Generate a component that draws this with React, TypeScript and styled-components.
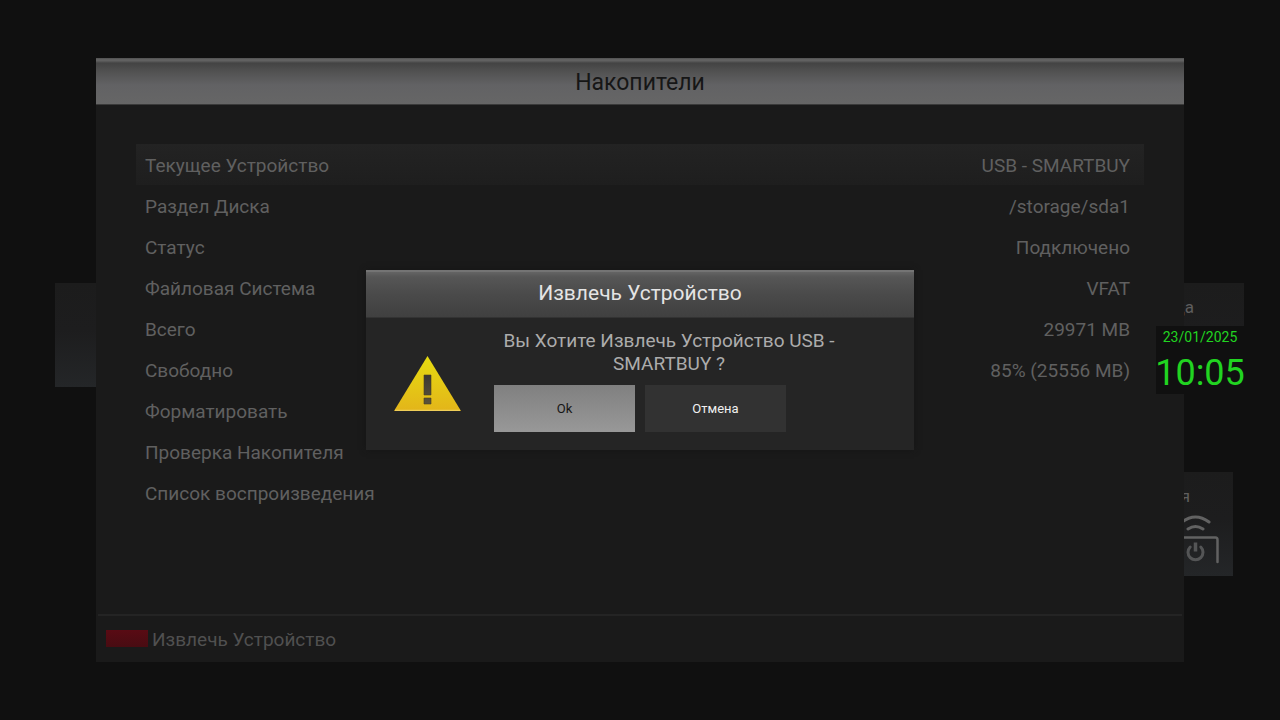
import React from "react";
import styled, { createGlobalStyle } from "styled-components";

const GlobalStyle = createGlobalStyle`
  *, *::before, *::after { box-sizing: border-box; }
  body {
    margin: 0;
    background: #101010;
    font-family: Roboto, "Liberation Sans", sans-serif;
  }
  h1, h2, p, dl, dt, dd { margin: 0; font-weight: 400; }
`;

const Screen = styled.div`
  position: relative;
  display: flex;
  min-height: 100vh;
  padding: 58px 7.5%;
  overflow: hidden;
`;

const Tile = styled.div<{ $left?: number; $right?: number; $top: number; $width: number }>`
  position: absolute;
  top: ${(p) => p.$top}px;
  ${(p) => (p.$left !== undefined ? `left: ${p.$left}px;` : "")}
  ${(p) => (p.$right !== undefined ? `right: ${p.$right}px;` : "")}
  width: ${(p) => p.$width}px;
  height: 104px;
  background: linear-gradient(#1c1c1c 0%, #1d1d1e 45%, #242628 100%);
  color: #5e5e5e;
`;

const TileLabel = styled.span<{ $inset: number }>`
  display: block;
  padding: 14px ${(p) => p.$inset}px 0 0;
  font-size: 17px;
  line-height: 20px;
  text-align: right;
`;

const RemoteIcon = styled.svg`
  position: absolute;
  right: 13px;
  bottom: 10px;
  width: 48px;
  height: 52px;
`;

const Clock = styled.time`
  position: absolute;
  top: 326px;
  right: 36px;
  display: flex;
  flex-direction: column;
  align-items: center;
  width: 88px;
  height: 68px;
  background: #101010;
  color: #21d421;
`;

const ClockDate = styled.span`
  font-size: 14px;
  line-height: 22px;
`;

const ClockTime = styled.span`
  font-size: 36px;
  line-height: 50px;
`;

const Panel = styled.main`
  position: relative;
  display: flex;
  flex: 1;
  flex-direction: column;
  background: #1a1a1a;
`;

const PanelHeader = styled.header`
  height: 47px;
  border-bottom: 1px solid #3a3a3a;
  background: linear-gradient(#505050 0, #666 2px, #525252 4px, #434343 5px, #525252 14px, #626264 27px, #666 46px);
  text-align: center;
`;

const PanelTitle = styled.h1`
  color: #161616;
  font-size: 23px;
  line-height: 50px;
`;

const Details = styled.dl`
  flex: 1;
  padding: 39px 40px 0;
`;

const DetailRow = styled.div<{ $selected?: boolean }>`
  display: flex;
  justify-content: space-between;
  height: 41px;
  padding: 0 14px 0 9px;
  background: ${(p) => (p.$selected ? "linear-gradient(#232323, #1e1e1e)" : "none")};
  color: #606060;
  font-size: 19px;
  line-height: 43px;
`;

const PanelFooter = styled.footer`
  display: flex;
  align-items: center;
  height: 48px;
  margin: 0 2px;
  padding: 2px 8px 0;
  border-top: 2px solid #242424;
`;

const FooterAction = styled.button`
  display: flex;
  align-items: center;
  gap: 4px;
  padding: 0;
  border: 0;
  background: none;
  color: #505050;
  font: inherit;
  font-size: 19px;
  line-height: 24px;
`;

const RedKey = styled.span`
  width: 42px;
  height: 17px;
  margin-bottom: 4px;
  background: linear-gradient(#590b14, #480c12);
`;

const Overlay = styled.div`
  position: absolute;
  inset: 0;
  display: flex;
  align-items: center;
  justify-content: center;
`;

const Dialog = styled.section`
  width: 548px;
  background: #252525;
  box-shadow: 0 0 6px #151515;
`;

const DialogHeader = styled.header`
  height: 48px;
  border-top: 2px solid #747474;
  border-bottom: 1px solid #333;
  background: linear-gradient(#646464 0, #565656 5px, #4a4a4a 50%, #404040 100%);
  text-align: center;
`;

const DialogTitle = styled.h2`
  color: #e4e4e4;
  font-size: 21px;
  line-height: 42px;
`;

const DialogBody = styled.div`
  display: flex;
  gap: 33px;
  padding: 11px 70px 18px 28px;
`;

const WarningIcon = styled.svg`
  flex: none;
  width: 67px;
  height: 55px;
  margin-top: 27px;
`;

const DialogContent = styled.div`
  flex: 1;
`;

const Message = styled.p`
  color: #acacac;
  font-size: 19px;
  line-height: 23px;
  text-align: center;
`;

const Actions = styled.div`
  display: flex;
  gap: 10px;
  margin-top: 10px;
`;

const DialogButton = styled.button<{ $focused?: boolean }>`
  width: 141px;
  height: 47px;
  padding: 0;
  border: 0;
  background: ${(p) => (p.$focused ? "linear-gradient(#808080, #989898)" : "#323232")};
  color: ${(p) => (p.$focused ? "#161616" : "#f0f0f0")};
  font: inherit;
  font-size: 13px;
`;

const details = [
  { label: "Текущее Устройство", value: "USB - SMARTBUY" },
  { label: "Раздел Диска", value: "/storage/sda1" },
  { label: "Статус", value: "Подключено" },
  { label: "Файловая Система", value: "VFAT" },
  { label: "Всего", value: "29971 MB" },
  { label: "Свободно", value: "85% (25556 MB)" },
  { label: "Форматировать", value: "" },
  { label: "Проверка Накопителя", value: "" },
  { label: "Список воспроизведения", value: "" },
];

export default function App() {
  return (
    <>
      <GlobalStyle />
      <Screen>
        <Tile $left={55} $top={283} $width={105} />
        <Tile $right={36} $top={283} $width={105}>
          <TileLabel $inset={50}>да</TileLabel>
        </Tile>
        <Tile $right={47} $top={472} $width={105}>
          <TileLabel $inset={43}>я</TileLabel>
          <RemoteIcon viewBox="0 0 48 52" fill="none" stroke="#626262" strokeWidth="3" strokeLinecap="round" aria-hidden="true">
            <path d="M10 8Q23.5-2 37 8M16 15Q23.5 10 31 15" />
            <path d="M2 49V26Q2 23.5 5 23.5H43.5Q45.5 23.5 45.5 26V48" strokeWidth="2.5" />
            <path d="M18.2 33A7.5 7.5 0 1 0 28.8 33" stroke="#545556" />
            <path d="M23.5 28.500V37.500" stroke="#545556" strokeWidth="3.5" strokeLinecap="butt" />
          </RemoteIcon>
        </Tile>

        <Panel>
          <PanelHeader>
            <PanelTitle>Накопители</PanelTitle>
          </PanelHeader>
          <Details>
            {details.map((item, index) => (
              <DetailRow key={item.label} $selected={index === 0}>
                <dt>{item.label}</dt>
                <dd>{item.value}</dd>
              </DetailRow>
            ))}
          </Details>
          <PanelFooter>
            <FooterAction type="button">
              <RedKey />
              Извлечь Устройство
            </FooterAction>
          </PanelFooter>
        </Panel>

        <Clock dateTime="2025-01-23T10:05">
          <ClockDate>23/01/2025</ClockDate>
          <ClockTime>10:05</ClockTime>
        </Clock>

        <Overlay>
          <Dialog role="dialog" aria-labelledby="dialog-title">
            <DialogHeader>
              <DialogTitle id="dialog-title">Извлечь Устройство</DialogTitle>
            </DialogHeader>
            <DialogBody>
              <WarningIcon viewBox="0 0 67 55" aria-hidden="true">
                <defs>
                  <linearGradient id="warning" x1="0" y1="0" x2="0" y2="1">
                    <stop offset="0" stopColor="#e6dc10" />
                    <stop offset="1" stopColor="#e3b51a" />
                  </linearGradient>
                  <linearGradient id="mark" x1="0" y1="0" x2="0" y2="1">
                    <stop offset="0" stopColor="#3a3833" />
                    <stop offset="1" stopColor="#5c523a" />
                  </linearGradient>
                </defs>
                <path d="M33.5 0L67 55H0Z" fill="url(#warning)" />
                <path d="M1 54.3H66" stroke="#f0d468" strokeWidth="1" />
                <path d="M30 19H37V39H30ZM30 42H37V48H30Z" fill="url(#mark)" stroke="#4b4220" strokeWidth="0.6" />
              </WarningIcon>
              <DialogContent>
                <Message>Вы Хотите Извлечь Устройство USB - SMARTBUY ?</Message>
                <Actions>
                  <DialogButton type="button" $focused>Ok</DialogButton>
                  <DialogButton type="button">Отмена</DialogButton>
                </Actions>
              </DialogContent>
            </DialogBody>
          </Dialog>
        </Overlay>
      </Screen>
    </>
  );
}
